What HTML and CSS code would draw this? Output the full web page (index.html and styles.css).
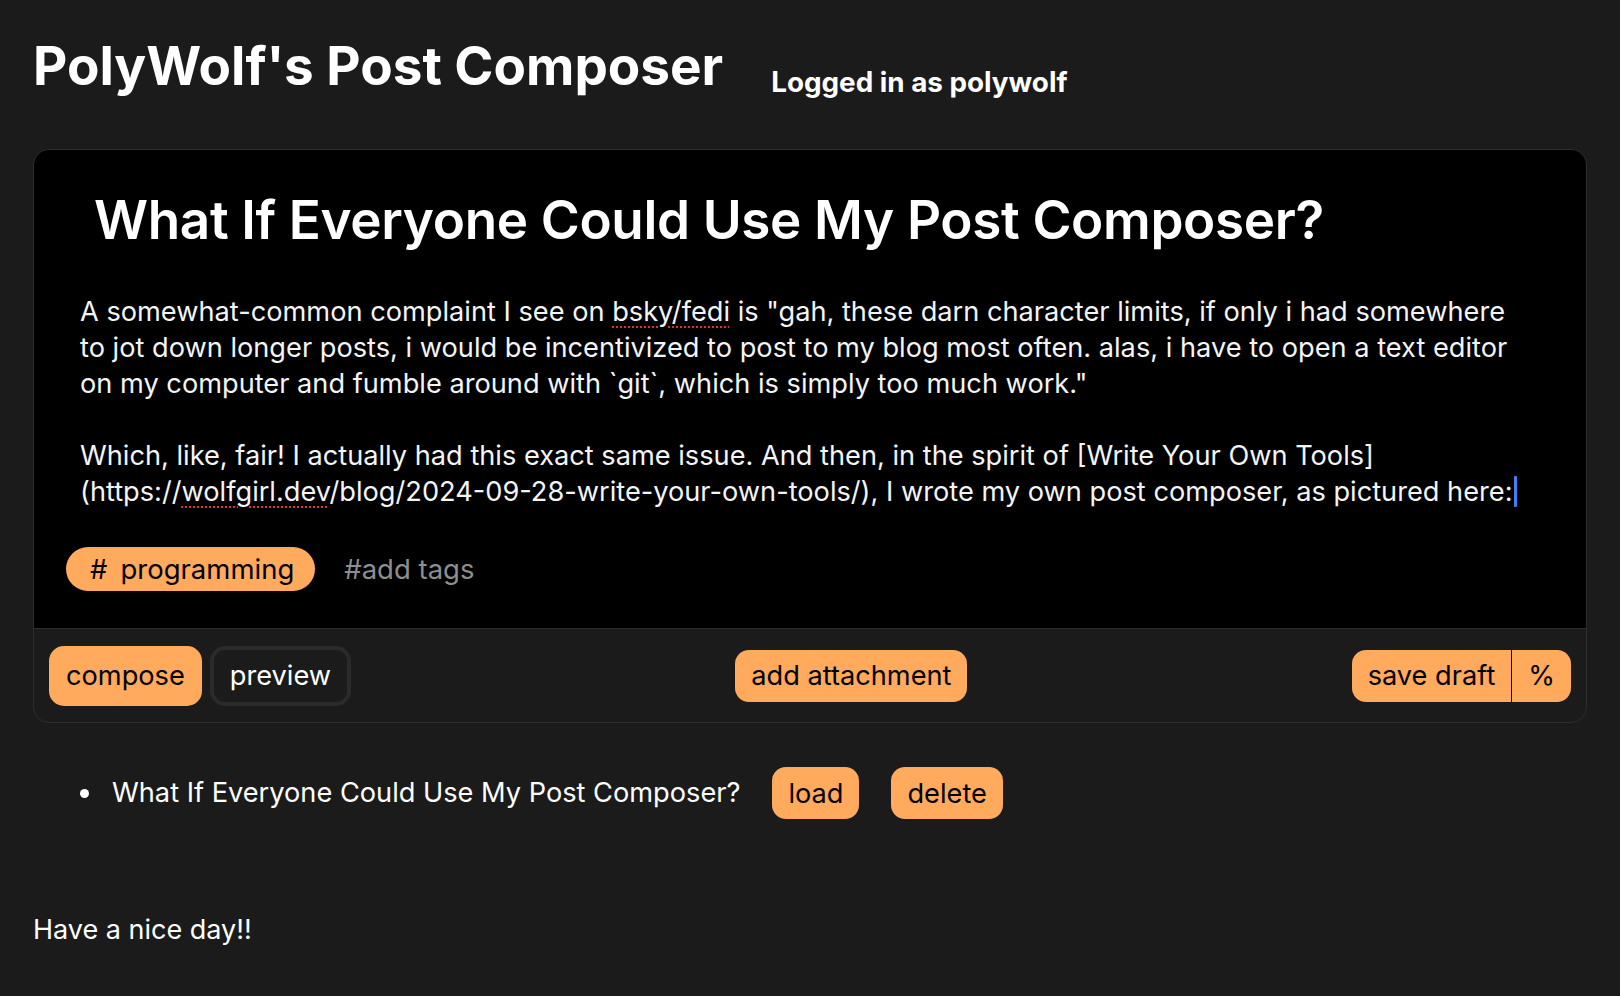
FILE: index.html
```html
<!DOCTYPE html>
<html lang="en">
<head>
<meta charset="utf-8">
<title>PolyWolf's Post Composer</title>
<link rel="stylesheet" href="styles.css">
</head>
<body>
<header class="top">
  <h1 class="site-title">PolyWolf's Post Composer</h1>
  <h3 class="login">Logged in as polywolf</h3>
</header>

<main class="card">
  <section class="editor">
    <div class="post-title">What If Everyone Could Use My Post Composer?</div>
    <div class="post-body">
      <span class="line">A somewhat-common complaint I see on <span class="spell">bsky/fedi</span> is "gah, these darn character limits, if only i had somewhere</span>
      <span class="line">to jot down longer posts, i would be incentivized to post to my blog most often. alas, i have to open a text editor</span>
      <span class="line">on my computer and fumble around with `git`, which is simply too much work."</span>
      <span class="line blank">&nbsp;</span>
      <span class="line">Which, like, fair! I actually had this exact same issue. And then, in the spirit of [Write Your Own Tools]</span>
      <span class="line">(https://<span class="spell">wolfgirl.dev</span>/blog/2024-09-28-write-your-own-tools/), I wrote my own post composer, as pictured here:<span class="caret"></span></span>
    </div>
    <div class="tags">
      <span class="tag"><span class="hash">#</span>programming</span>
      <span class="tag-input">#add tags</span>
    </div>
  </section>
  <footer class="toolbar">
    <div class="mode">
      <button class="btn mode-btn active">compose</button>
      <button class="btn mode-btn">preview</button>
    </div>
    <button class="btn">add attachment</button>
    <div class="split">
      <button class="btn split-main">save draft</button>
      <button class="btn split-side">%</button>
    </div>
  </footer>
</main>

<ul class="drafts">
  <li class="draft">
    <span class="draft-title">What If Everyone Could Use My Post Composer?</span>
    <button class="btn small">load</button>
    <button class="btn small">delete</button>
  </li>
</ul>

<p class="bye">Have a nice day!!</p>
</body>
</html>
```

FILE: styles.css
```css
html, body {
  margin: 0;
  padding: 0;
}

body {
  background: #1b1b1b;
  color: #ffffff;
  font-family: Inter, "Noto Sans", sans-serif;
  padding: 0 33px;
  height: 996px;
  box-sizing: border-box;
  overflow: hidden;
}

.top {
  display: flex;
  align-items: flex-start;
  padding-top: 34px;
}

.site-title {
  margin: 0;
  font-size: 53px;
  line-height: 64px;
  font-weight: 700;
}

.login {
  margin: 32px 0 0 48px;
  font-size: 27.8px;
  line-height: 32px;
  font-weight: 700;
}

.card {
  margin-top: 51px;
  border: 1px solid #2e2e2e;
  border-radius: 16px;
  overflow: hidden;
  background: #1b1b1b;
}

.editor {
  background: #000;
  padding: 37px 0 37px 0;
  border-bottom: 1px solid #2e2e2e;
}

.post-title {
  font-size: 53px;
  line-height: 66px;
  font-weight: 600;
  padding-left: 60px;
  letter-spacing: -0.35px;
}

.post-body {
  margin-top: 41px;
  padding-left: 46px;
  font-size: 27.2px;
  line-height: 36px;
  color: #f4f4f4;
}

.line {
  display: block;
  white-space: nowrap;
}

.spell {
  text-decoration: underline dotted #e0302a;
  text-decoration-thickness: 2px;
  text-underline-offset: 5px;
}

.caret {
  display: inline-block;
  width: 3px;
  height: 31px;
  background: #3b82f6;
  vertical-align: -6px;
  margin-left: 1px;
  border-radius: 1px;
}

.tags {
  display: flex;
  align-items: center;
  gap: 29px;
  margin-top: 37px;
  padding-left: 32px;
}

.tag {
  display: inline-flex;
  align-items: center;
  height: 44px;
  padding: 0 21px 0 24px;
  background: #ffaa5c;
  color: #000;
  border-radius: 22px;
  font-size: 27.5px;
}

.hash {
  margin-right: 13px;
}

.tag-input {
  font-size: 27.5px;
  color: #8e8e8e;
}

.toolbar {
  display: flex;
  align-items: center;
  justify-content: space-between;
  height: 93px;
  padding: 0 15px;
}

.btn {
  font-family: inherit;
  font-size: 27.2px;
  height: 52px;
  padding: 0 16px;
  border: none;
  border-radius: 14px;
  background: #ffaa5c;
  color: #000;
  cursor: pointer;
}

.mode {
  display: flex;
  gap: 8px;
}

.mode-btn {
  height: 60px;
  padding: 0 13px;
  border: 4px solid #2a2a2a;
  background: #1b1b1b;
  color: #fff;
  border-radius: 15px;
}

.mode-btn + .mode-btn {
  padding: 0 16px;
}

.mode-btn.active {
  background: #ffaa5c;
  border-color: #ffaa5c;
  color: #000;
}

.split {
  display: flex;
}

.split-main {
  border-radius: 14px 0 0 14px;
  border-right: 1px solid #000;
  padding: 0 16px 0 16px;
}

.split-side {
  border-radius: 0 14px 14px 0;
  padding: 0 16px;
}

.drafts {
  list-style: none;
  margin: 44px 0 0 0;
  padding-left: 47px;
}

.draft {
  display: flex;
  align-items: center;
  font-size: 27.2px;
  line-height: 52px;
}

.draft::before {
  content: "";
  width: 9px;
  height: 9px;
  border-radius: 50%;
  background: #fff;
  margin-right: 23px;
}

.draft-title {
  margin-right: 32px;
}

.small {
  margin-right: 32px;
}

.bye {
  margin: 93px 0 0 0;
  font-size: 27px;
  line-height: 36px;
}
```
